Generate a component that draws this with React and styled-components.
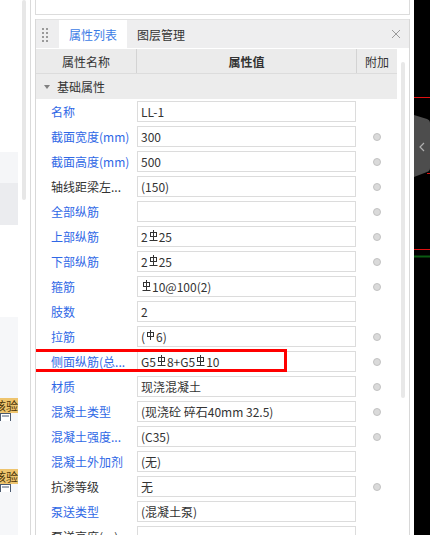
import React from 'react';
import styled, { createGlobalStyle } from 'styled-components';

const GlobalStyle = createGlobalStyle`
  html, body {
    margin: 0;
    padding: 0;
    background: #fff;
  }
  body {
    width: 430px;
    height: 535px;
    overflow: hidden;
    font-family: "Noto Sans CJK SC", "Noto Sans", sans-serif;
    font-size: 12px;
    color: #333;
  }
`;

const Page = styled.div`
  display: flex;
  width: 430px;
  height: 535px;
  overflow: hidden;
  background: #fff;
`;

/* left list (mostly hidden behind the dock) */
const LeftStrip = styled.div`
  display: flex;
  flex-shrink: 0;
  width: 30px;
  border-right: 1px solid #dadada;
  margin-right: 4px;
`;

const LeftList = styled.div`
  display: flex;
  flex-direction: column;
  width: 18px;
  padding-top: 152px;
`;

const ListBlock = styled.div`
  flex-shrink: 0;
  height: ${p => p.$h}px;
  background: ${p => p.$bg};
`;

const ListTail = styled.div`
  display: flex;
  flex-direction: column;
  flex: 1;
  margin-top: 92px;
  padding-top: 81px;
  background: #f6f7f9;
`;

const Tag = styled.div`
  display: flex;
  justify-content: flex-end;
  flex-shrink: 0;
  height: 15px;
  line-height: 15px;
  overflow: hidden;
  white-space: nowrap;
  background: #eec46e;
  color: #4a3408;
  font-size: 12px;
`;

const DocMark = styled.svg`
  display: block;
  flex-shrink: 0;
  margin-bottom: 48px;
`;

const LeftScroll = styled.div`
  width: 4px;
  height: 200px;
  margin-left: 4px;
  border-radius: 2px;
  background: #e7e7e7;
`;

/* property dock */
const Panel = styled.div`
  display: flex;
  flex-direction: column;
  flex-shrink: 0;
  width: 375px;
`;

const TopBox = styled.div`
  flex-shrink: 0;
  height: 14px;
  border: 1px solid #dcdcdc;
  border-top: none;
  margin-bottom: 4px;
`;

const Dock = styled.div`
  display: flex;
  flex-direction: column;
  flex: 1;
  min-height: 0;
  border-left: 1px solid #d8d8d8;
  border-right: 1px solid #d8d8d8;
`;

const DockHeader = styled.div`
  display: flex;
  align-items: stretch;
  flex-shrink: 0;
  height: 28px;
  border-top: 1px solid #e2e2e2;
  background: #eeeeef;
  margin-bottom: 1px;
`;

const Grip = styled.div`
  display: flex;
  align-items: center;
  width: 23px;
  padding-left: 6px;
  box-sizing: border-box;
`;

const Tab = styled.div`
  display: flex;
  align-items: center;
  padding: 0 10px;
  font-size: 12px;
  background: ${p => (p.$active ? '#fff' : 'transparent')};
  color: ${p => (p.$active ? '#3c7ce6' : '#333')};
`;

const CloseBtn = styled.div`
  display: flex;
  align-items: center;
  justify-content: center;
  width: 26px;
  margin-left: auto;
`;

const Body = styled.div`
  display: flex;
  flex: 1;
  min-height: 0;
  overflow: hidden;
`;

const Table = styled.div`
  display: flex;
  flex-direction: column;
  width: 361px;
  flex-shrink: 0;
`;

const cols = '101px 220px 40px';

const HeadRow = styled.div`
  display: grid;
  grid-template-columns: ${cols};
  flex-shrink: 0;
  height: 24px;
  background: #ebebeb;
  border-bottom: 1px solid #dcdcdc;
`;

const HeadCell = styled.div`
  display: flex;
  align-items: center;
  justify-content: center;
  border-right: ${p => (p.$last ? 'none' : '1px solid #d3d3d3')};
  font-weight: ${p => (p.$bold ? 700 : 400)};
  color: #333;
`;

const GroupRow = styled.div`
  display: flex;
  align-items: center;
  flex-shrink: 0;
  gap: 7px;
  height: 25px;
  padding-left: 8px;
  background: #ececec;
  color: #333;
`;

const Caret = styled.span`
  width: 0;
  height: 0;
  border-left: 3px solid transparent;
  border-right: 3px solid transparent;
  border-top: 4px solid #808080;
`;

const Row = styled.div`
  position: relative;
  display: grid;
  grid-template-columns: ${cols};
  height: 25px;
  flex-shrink: 0;
`;

const NameCell = styled.div`
  display: flex;
  align-items: center;
  padding-left: 15px;
  white-space: nowrap;
  overflow: hidden;
  color: ${p => (p.$link ? '#2f68e6' : '#333')};
`;

const ValueCell = styled.div`
  padding: 2px 1px 2px 0;
`;

const ValueBox = styled.div`
  display: flex;
  align-items: center;
  height: 100%;
  box-sizing: border-box;
  padding-left: 3px;
  border: 1px solid #dcdcdc;
  white-space: nowrap;
  overflow: hidden;
  color: #333;
`;

const ExtraCell = styled.div`
  display: flex;
  align-items: center;
  justify-content: center;
`;

const Dot = styled.span`
  width: 6px;
  height: 6px;
  border-radius: 50%;
  background: #dadada;
  border: 1px solid #c2c2c2;
`;

const Highlight = styled.div`
  position: absolute;
  top: 0;
  left: -5px;
  width: 256px;
  height: 23px;
  box-sizing: border-box;
  border: 3px solid #ff0000;
  pointer-events: none;
  z-index: 2;
`;

const ScrollCol = styled.div`
  width: 12px;
`;

const Thumb = styled.div`
  width: 4px;
  height: 336px;
  margin: 13px 0 0 4px;
  border-radius: 2px;
  background: #e8e8e8;
`;

const Viewport = styled.div`
  flex: 1;
  margin-left: 4px;
  background: #000;
`;

const RebarSvg = styled.svg`
  display: inline-block;
  margin: 0 1px;
  position: relative;
  top: -1px;
`;

const Grade3 = () => (
  <RebarSvg width="9" height="11" viewBox="0 0 9 11">
    <rect x="1.5" y="2.5" width="6" height="4" fill="none" stroke="#333" strokeWidth="1" />
    <line x1="4.5" y1="0" x2="4.5" y2="10.5" stroke="#333" strokeWidth="1" />
    <line x1="0.5" y1="10.5" x2="8.5" y2="10.5" stroke="#333" strokeWidth="1" />
  </RebarSvg>
);

const Grade1 = () => (
  <RebarSvg width="9" height="11" viewBox="0 0 9 11">
    <rect x="1.5" y="2.5" width="6" height="4" fill="none" stroke="#333" strokeWidth="1" />
    <line x1="4.5" y1="0" x2="4.5" y2="10" stroke="#333" strokeWidth="1" />
  </RebarSvg>
);

// '#' = HRB400 symbol, '%' = HPB300 symbol
const renderValue = v =>
  v.split(/([#%])/).map((part, i) => {
    if (part === '#') return <Grade3 key={i} />;
    if (part === '%') return <Grade1 key={i} />;
    return part ? <span key={i}>{part}</span> : null;
  });

const rows = [
  { name: '名称', value: 'LL-1', link: true, extra: false },
  { name: '截面宽度(mm)', value: '300', link: true, extra: true },
  { name: '截面高度(mm)', value: '500', link: true, extra: true },
  { name: '轴线距梁左...', value: '(150)', link: false, extra: true },
  { name: '全部纵筋', value: '', link: true, extra: true },
  { name: '上部纵筋', value: '2#25', link: true, extra: true },
  { name: '下部纵筋', value: '2#25', link: true, extra: true },
  { name: '箍筋', value: '#10@100(2)', link: true, extra: true },
  { name: '肢数', value: '2', link: true, extra: false },
  { name: '拉筋', value: '(%6)', link: true, extra: true },
  { name: '侧面纵筋(总...', value: 'G5#8+G5#10', link: true, extra: true, marked: true },
  { name: '材质', value: '现浇混凝土', link: true, extra: true },
  { name: '混凝土类型', value: '(现浇砼 碎石40mm 32.5)', link: true, extra: true },
  { name: '混凝土强度...', value: '(C35)', link: true, extra: true },
  { name: '混凝土外加剂', value: '(无)', link: true, extra: false },
  { name: '抗渗等级', value: '无', link: false, extra: true },
  { name: '泵送类型', value: '(混凝土泵)', link: true, extra: false },
  { name: '泵送高度(m)', value: '', link: false, extra: false },
];

const App = () => (
  <>
    <GlobalStyle />
    <Page>
      <LeftStrip>
        <LeftList>
          <ListBlock $h={31} $bg="#f5f6f8" />
          <ListBlock $h={42} $bg="#ebecef" />
          <ListTail>
            <Tag>核验</Tag>
            <DocMark width="12" height="8" viewBox="0 0 12 8">
              <rect x="0.5" y="0.5" width="10" height="8" fill="#fff" stroke="#4a5a70" strokeWidth="1" />
              <line x1="2" y1="3" x2="9" y2="3" stroke="#4a5a70" strokeWidth="1" />
            </DocMark>
            <Tag>核验</Tag>
            <DocMark width="12" height="8" viewBox="0 0 12 8">
              <rect x="0.5" y="0.5" width="10" height="8" fill="#fff" stroke="#4a5a70" strokeWidth="1" />
              <line x1="2" y1="3" x2="9" y2="3" stroke="#4a5a70" strokeWidth="1" />
            </DocMark>
          </ListTail>
        </LeftList>
        <LeftScroll />
      </LeftStrip>

      <Panel>
        <TopBox />
        <Dock>
          <DockHeader>
            <Grip>
              <svg width="8" height="15" viewBox="0 0 8 15">
                {[0, 1, 2, 3].map(r =>
                  [0, 1].map(c => (
                    <rect key={`${r}-${c}`} x={c * 4} y={1 + r * 4} width="2" height="2" fill="#9a9a9a" />
                  ))
                )}
              </svg>
            </Grip>
            <Tab $active>属性列表</Tab>
            <Tab>图层管理</Tab>
            <CloseBtn>
              <svg width="10" height="10" viewBox="0 0 10 10">
                <path d="M1 1 L9 9 M9 1 L1 9" stroke="#9a9a9a" strokeWidth="1" fill="none" />
              </svg>
            </CloseBtn>
          </DockHeader>

          <Body>
            <Table>
              <HeadRow>
                <HeadCell>属性名称</HeadCell>
                <HeadCell $bold>属性值</HeadCell>
                <HeadCell $last>附加</HeadCell>
              </HeadRow>
              <GroupRow>
                <Caret />
                <span>基础属性</span>
              </GroupRow>
              {rows.map(r => (
                <Row key={r.name}>
                  <NameCell $link={r.link}>{r.name}</NameCell>
                  <ValueCell>
                    <ValueBox>{renderValue(r.value)}</ValueBox>
                  </ValueCell>
                  <ExtraCell>{r.extra && <Dot />}</ExtraCell>
                  {r.marked && <Highlight />}
                </Row>
              ))}
            </Table>
            <ScrollCol>
              <Thumb />
            </ScrollCol>
          </Body>
        </Dock>
      </Panel>

      <Viewport>
        <svg width="16" height="535" viewBox="0 0 16 535">
          <line x1="0" y1="97.5" x2="16" y2="97.5" stroke="#e01010" strokeWidth="1" />
          <path d="M0 115 L13 119 Q16 120 16 123 L16 168 Q16 171 13 172 L0 177 Z" fill="#4d4d4d" />
          <path d="M10 143 L6 147 L10 151" stroke="#b0b0b0" strokeWidth="1.2" fill="none" />
          <line x1="13" y1="173.5" x2="16" y2="173.5" stroke="#e01010" strokeWidth="1" />
          <line x1="0" y1="249.5" x2="16" y2="249.5" stroke="#e01010" strokeWidth="1" />
          <line x1="0" y1="256.5" x2="16" y2="256.5" stroke="#0b5a12" strokeWidth="2" />
        </svg>
      </Viewport>
    </Page>
  </>
);

export default App;
